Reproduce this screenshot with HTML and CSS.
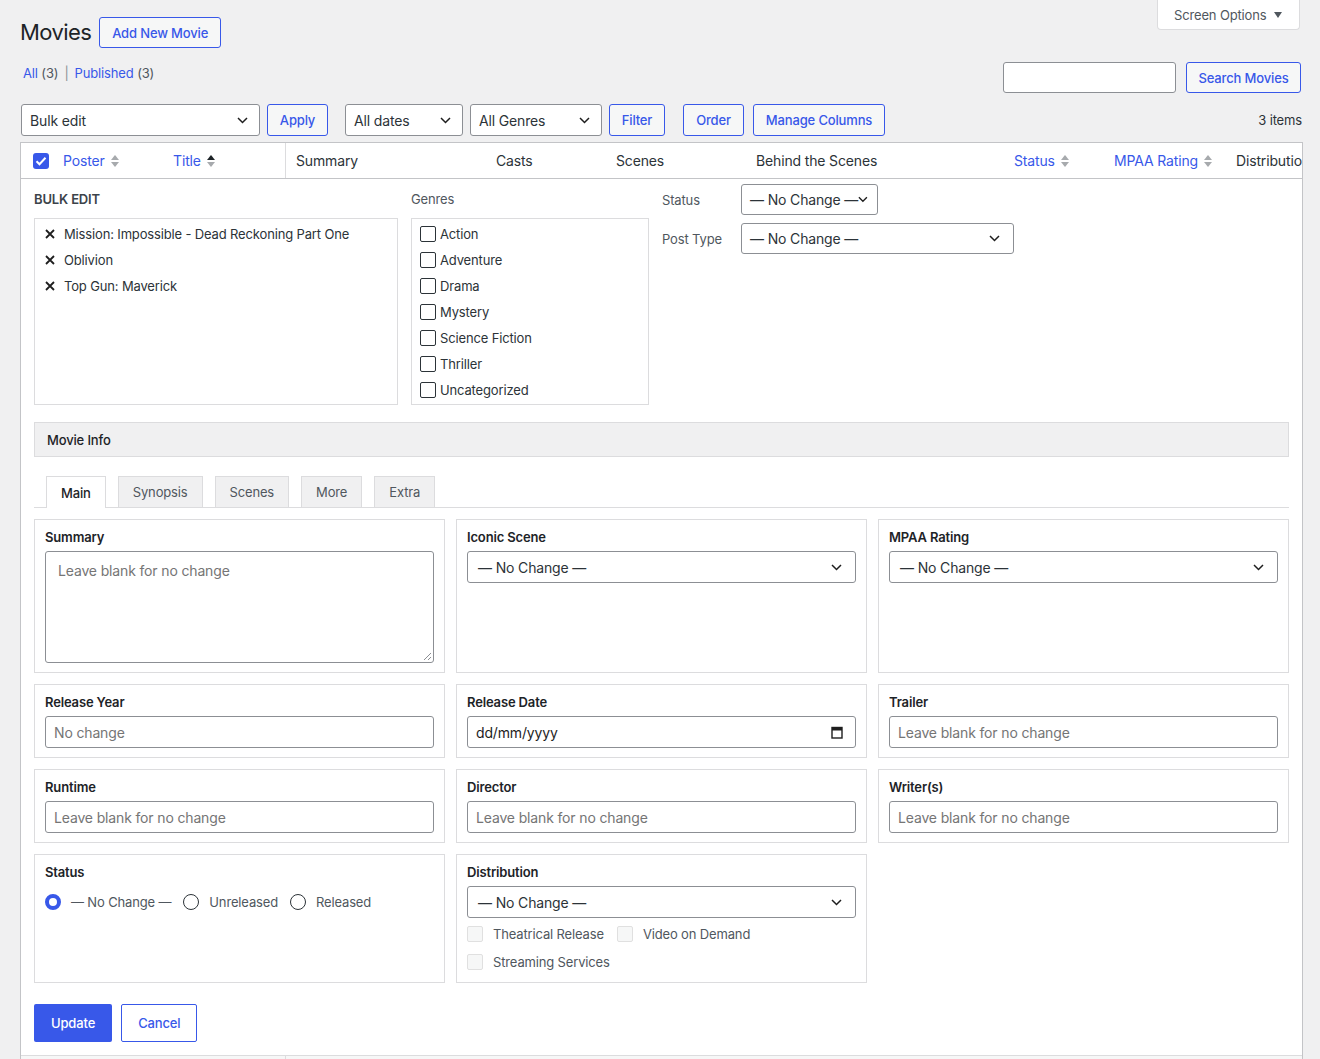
FILE: index.html
```html
<!DOCTYPE html>
<html lang="en">
<head>
	<meta charset="utf-8">
	<title>Movies</title>
	<link rel="stylesheet" href="styles.css">
</head>
<body>
<div class="wrap">
	<div class="top">
		<div class="title-line">
			<h1>Movies</h1>
			<a class="button" href="#">Add New Movie</a>
		</div>
		<div class="screen-options">Screen Options
			<svg width="8" height="6" viewBox="0 0 8 6"><path d="M0 0h8L4 6z" fill="#50575e"/></svg>
		</div>
	</div>

	<div class="subbar">
		<div class="subsubsub">
			<span><a href="#">All</a> <span class="count">(3)</span></span>
			<span class="sep">|</span>
			<span><a href="#">Published</a> <span class="count">(3)</span></span>
		</div>
		<div class="search">
			<div class="search-input"></div>
			<a class="button" href="#">Search Movies</a>
		</div>
	</div>

	<div class="tablenav">
		<div class="select w-bulk"><span>Bulk edit</span>
			<svg width="11" height="7" viewBox="0 0 11 7"><path d="M1 1l4.5 4.5L10 1" stroke="#1e1e1e" stroke-width="1.5" fill="none"/></svg>
		</div>
		<a class="button btn-apply" href="#">Apply</a>
		<div class="select w-dates"><span>All dates</span>
			<svg width="11" height="7" viewBox="0 0 11 7"><path d="M1 1l4.5 4.5L10 1" stroke="#1e1e1e" stroke-width="1.5" fill="none"/></svg>
		</div>
		<div class="select w-genres"><span>All Genres</span>
			<svg width="11" height="7" viewBox="0 0 11 7"><path d="M1 1l4.5 4.5L10 1" stroke="#1e1e1e" stroke-width="1.5" fill="none"/></svg>
		</div>
		<a class="button btn-filter" href="#">Filter</a>
		<a class="button btn-order" href="#">Order</a>
		<a class="button btn-columns" href="#">Manage Columns</a>
		<div class="items-count">3 items</div>
	</div>

	<div class="table">
		<div class="thead">
			<div class="th col-cb">
				<span class="cb-checked">
					<svg width="12" height="10" viewBox="0 0 12 10"><path d="M1.5 5.2l3 3L10.5 1.8" stroke="#fff" stroke-width="2" fill="none"/></svg>
				</span>
			</div>
			<div class="th col-poster"><a href="#">Poster</a>
				<svg width="8" height="14" viewBox="0 0 8 14"><path d="M0 6L4 1l4 5z" fill="#a7aaad"/><path d="M0 8h8l-4 5z" fill="#a7aaad"/></svg>
			</div>
			<div class="th col-title"><a href="#">Title</a>
				<svg width="8" height="14" viewBox="0 0 8 14"><path d="M0 6L4 1l4 5z" fill="#1d2327"/><path d="M0 8h8l-4 5z" fill="#a7aaad"/></svg>
			</div>
			<div class="th col-summary">Summary</div>
			<div class="th col-casts">Casts</div>
			<div class="th col-scenes">Scenes</div>
			<div class="th col-bts">Behind the Scenes</div>
			<div class="th col-status"><a href="#">Status</a>
				<svg width="8" height="14" viewBox="0 0 8 14"><path d="M0 6L4 1l4 5z" fill="#a7aaad"/><path d="M0 8h8l-4 5z" fill="#a7aaad"/></svg>
			</div>
			<div class="th col-mpaa"><a href="#">MPAA Rating</a>
				<svg width="8" height="14" viewBox="0 0 8 14"><path d="M0 6L4 1l4 5z" fill="#a7aaad"/><path d="M0 8h8l-4 5z" fill="#a7aaad"/></svg>
			</div>
			<div class="th col-dist">Distribution</div>
		</div>

		<div class="bulk">
			<div class="bulk-top">
				<div class="bulk-col">
					<div class="bulk-label bulk-title">Bulk Edit</div>
					<ul class="title-list">
						<li><svg width="10" height="10" viewBox="0 0 10 10"><path d="M1 1l8 8M9 1l-8 8" stroke="#1e1e1e" stroke-width="1.8"/></svg>Mission: Impossible - Dead Reckoning Part One</li>
						<li><svg width="10" height="10" viewBox="0 0 10 10"><path d="M1 1l8 8M9 1l-8 8" stroke="#1e1e1e" stroke-width="1.8"/></svg>Oblivion</li>
						<li><svg width="10" height="10" viewBox="0 0 10 10"><path d="M1 1l8 8M9 1l-8 8" stroke="#1e1e1e" stroke-width="1.8"/></svg>Top Gun: Maverick</li>
					</ul>
				</div>
				<div class="bulk-col">
					<div class="bulk-label">Genres</div>
					<ul class="genre-list">
						<li><span class="box"></span>Action</li>
						<li><span class="box"></span>Adventure</li>
						<li><span class="box"></span>Drama</li>
						<li><span class="box"></span>Mystery</li>
						<li><span class="box"></span>Science Fiction</li>
						<li><span class="box"></span>Thriller</li>
						<li><span class="box"></span>Uncategorized</li>
					</ul>
				</div>
				<div class="bulk-fields">
					<div class="field-row">
						<span class="lbl">Status</span>
						<div class="select s-status"><span>— No Change —</span>
							<svg width="11" height="7" viewBox="0 0 11 7"><path d="M1 1l4.5 4.5L10 1" stroke="#1e1e1e" stroke-width="1.5" fill="none"/></svg>
						</div>
					</div>
					<div class="field-row">
						<span class="lbl">Post Type</span>
						<div class="select s-post"><span>— No Change —</span>
							<svg width="11" height="7" viewBox="0 0 11 7"><path d="M1 1l4.5 4.5L10 1" stroke="#1e1e1e" stroke-width="1.5" fill="none"/></svg>
						</div>
					</div>
				</div>
			</div>

			<div class="section-bar">Movie Info</div>

			<div class="tabs">
				<div class="tab active">Main</div>
				<div class="tab">Synopsis</div>
				<div class="tab">Scenes</div>
				<div class="tab">More</div>
				<div class="tab">Extra</div>
			</div>

			<div class="fields">
				<div class="card">
					<div class="card-label">Summary</div>
					<div class="input textarea">Leave blank for no change
						<svg class="grip" width="8" height="8" viewBox="0 0 8 8"><path d="M8 1L1 8M8 5L5 8" stroke="#8c8f94" stroke-width="1"/></svg>
					</div>
				</div>
				<div class="card">
					<div class="card-label">Iconic Scene</div>
					<div class="select field-select"><span>— No Change —</span>
						<svg width="11" height="7" viewBox="0 0 11 7"><path d="M1 1l4.5 4.5L10 1" stroke="#1e1e1e" stroke-width="1.5" fill="none"/></svg>
					</div>
				</div>
				<div class="card">
					<div class="card-label">MPAA Rating</div>
					<div class="select field-select"><span>— No Change —</span>
						<svg width="11" height="7" viewBox="0 0 11 7"><path d="M1 1l4.5 4.5L10 1" stroke="#1e1e1e" stroke-width="1.5" fill="none"/></svg>
					</div>
				</div>

				<div class="card">
					<div class="card-label">Release Year</div>
					<div class="input">No change</div>
				</div>
				<div class="card">
					<div class="card-label">Release Date</div>
					<div class="input date"><span>dd/mm/yyyy</span>
						<svg width="12" height="13" viewBox="0 0 12 13"><rect x="1" y="1.5" width="10" height="10.5" fill="none" stroke="#1e1e1e" stroke-width="1.4"/><rect x="1" y="1.5" width="10" height="3" fill="#1e1e1e"/></svg>
					</div>
				</div>
				<div class="card">
					<div class="card-label">Trailer</div>
					<div class="input">Leave blank for no change</div>
				</div>

				<div class="card">
					<div class="card-label">Runtime</div>
					<div class="input">Leave blank for no change</div>
				</div>
				<div class="card">
					<div class="card-label">Director</div>
					<div class="input">Leave blank for no change</div>
				</div>
				<div class="card">
					<div class="card-label">Writer(s)</div>
					<div class="input">Leave blank for no change</div>
				</div>

				<div class="card">
					<div class="card-label">Status</div>
					<div class="radios">
						<span class="radio checked"></span><span class="radio-text">— No Change —</span>
						<span class="radio"></span><span class="radio-text">Unreleased</span>
						<span class="radio"></span><span class="radio-text">Released</span>
					</div>
				</div>
				<div class="card">
					<div class="card-label">Distribution</div>
					<div class="select field-select"><span>— No Change —</span>
						<svg width="11" height="7" viewBox="0 0 11 7"><path d="M1 1l4.5 4.5L10 1" stroke="#1e1e1e" stroke-width="1.5" fill="none"/></svg>
					</div>
					<div class="checks">
						<span class="check"><span class="box disabled"></span>Theatrical Release</span>
						<span class="check"><span class="box disabled"></span>Video on Demand</span>
						<span class="check"><span class="box disabled"></span>Streaming Services</span>
					</div>
				</div>
			</div>

			<div class="actions">
				<a class="btn-primary" href="#">Update</a>
				<a class="btn-cancel" href="#">Cancel</a>
			</div>
		</div>

		<div class="next-row">
			<div class="next-cell"></div>
		</div>
	</div>
</div>
</body>
</html>
```

FILE: styles.css
```css
html, body {
	margin: 0;
	padding: 0;
}

*, *:before, *:after {
	box-sizing: border-box;
}

body {
	background: #f0f0f1;
	color: #1d2327;
	font-family: Inter, "Noto Sans", sans-serif;
	font-size: 13px;
	letter-spacing: -0.15px;
}

a {
	color: #3858e9;
	text-decoration: none;
}

ul {
	list-style: none;
	margin: 0;
}

.wrap {
	padding: 0 17px 0 20px;
}

/* page header */

.top {
	display: flex;
	justify-content: space-between;
	align-items: flex-start;
}

.title-line {
	display: flex;
	align-items: center;
	gap: 8px;
	padding-top: 17px;
}

h1 {
	margin: 0;
	font-size: 22px;
	font-weight: 400;
	line-height: 31px;
	letter-spacing: -0.6px;
}

.button {
	display: inline-flex;
	align-items: center;
	justify-content: center;
	height: 31px;
	padding: 0 12px;
	border: 1px solid #3858e9;
	border-radius: 3px;
	background: #f6f7f7;
	color: #3858e9;
	font-size: 13px;
	font-weight: 500;
	white-space: nowrap;
}

.title-line .button {
	width: 122px;
}

.screen-options {
	display: flex;
	align-items: center;
	gap: 8px;
	width: 143px;
	height: 30px;
	padding: 0 16px;
	margin-right: 3px;
	background: #fff;
	border: 1px solid #dcdcde;
	border-top: none;
	border-radius: 0 0 4px 4px;
	color: #50575e;
}

.subbar {
	display: flex;
	justify-content: space-between;
	align-items: flex-start;
	margin-top: 14px;
}

.subsubsub {
	display: flex;
	gap: 6px;
	margin-top: 2px;
	padding-left: 3px;
	line-height: 18px;
}

.count {
	color: #50575e;
}

.sep {
	color: #8c8f94;
}

.search {
	display: flex;
	gap: 10px;
	margin-right: 2px;
}

.search-input {
	width: 173px;
	height: 31px;
	background: #fff;
	border: 1px solid #8c8f94;
	border-radius: 3px;
}

.search .button {
	width: 115px;
}

/* toolbar */

.tablenav {
	display: flex;
	align-items: center;
	height: 32px;
	margin-top: 11px;
}

.select {
	display: flex;
	align-items: center;
	justify-content: space-between;
	height: 32px;
	padding: 0 11px 0 8px;
	background: #fff;
	border: 1px solid #8c8f94;
	border-radius: 3px;
	color: #2c3338;
	font-size: 14px;
	white-space: nowrap;
}

.tablenav .button {
	height: 32px;
}

.w-bulk {
	width: 239px;
	margin-left: 1px;
}

.btn-apply {
	width: 61px;
	margin-left: 7px;
}

.w-dates {
	width: 118px;
	margin-left: 17px;
}

.w-genres {
	width: 132px;
	margin-left: 7px;
}

.btn-filter {
	width: 56px;
	margin-left: 7px;
}

.btn-order {
	width: 61px;
	margin-left: 18px;
}

.btn-columns {
	width: 132px;
	margin-left: 9px;
}

.items-count {
	margin-left: auto;
	margin-right: 1px;
	color: #2c3338;
}

/* table */

.table {
	margin-top: 6px;
	background: #fff;
	border: 1px solid #c3c4c7;
	overflow: hidden;
}

.thead {
	display: flex;
	height: 36px;
	border-bottom: 1px solid #c3c4c7;
}

.th {
	display: flex;
	align-items: center;
	gap: 6px;
	flex-shrink: 0;
	padding-left: 8px;
	color: #2c3338;
	font-size: 14px;
	white-space: nowrap;
}

.col-cb { width: 34px; padding-left: 12px; }
.col-poster { width: 110px; }
.col-title { width: 121px; border-right: 1px solid #dcdcde; }
.col-summary { width: 202px; padding-left: 10px; }
.col-casts { width: 120px; }
.col-scenes { width: 140px; }
.col-bts { width: 258px; }
.col-status { width: 100px; }
.col-mpaa { width: 122px; }

.cb-checked {
	display: flex;
	align-items: center;
	justify-content: center;
	width: 16px;
	height: 16px;
	border-radius: 3px;
	background: #3858e9;
}

/* bulk edit */

.bulk {
	padding: 0 13px 13px;
}

.bulk-top {
	display: flex;
	gap: 13px;
	padding-top: 5px;
}

.bulk-col {
	margin-top: 6px;
}

.bulk-label {
	margin-bottom: 10px;
	line-height: 18px;
	color: #50575e;
}

.bulk-title {
	color: #3c434a;
	font-weight: 600;
	text-transform: uppercase;
}

.title-list {
	width: 364px;
	height: 187px;
	padding: 6px 10px;
	border: 1px solid #dcdcde;
}

.title-list li {
	display: flex;
	align-items: center;
	gap: 9px;
	margin-bottom: 8px;
	line-height: 18px;
	color: #2c3338;
}

.genre-list {
	width: 238px;
	height: 187px;
	padding: 6px 8px;
	border: 1px solid #dcdcde;
}

.genre-list li {
	display: flex;
	align-items: center;
	gap: 4px;
	margin-bottom: 8px;
	line-height: 18px;
	color: #2c3338;
}

.box {
	display: inline-block;
	width: 16px;
	height: 16px;
	border: 1px solid #2c3338;
	border-radius: 2px;
	background: #fff;
}

.box.disabled {
	border-color: #e0e0e0;
	background: #f6f7f7;
}

.bulk-fields {
	display: flex;
	flex-direction: column;
	gap: 8px;
}

.field-row {
	display: flex;
	align-items: center;
}

.field-row .lbl {
	width: 79px;
	color: #50575e;
}

.s-status {
	width: 137px;
	height: 31px;
	padding-right: 9px;
}

.s-post {
	width: 273px;
	height: 31px;
	padding-right: 13px;
}

.section-bar {
	display: flex;
	align-items: center;
	height: 35px;
	margin-top: 17px;
	padding-left: 12px;
	background: #f0f0f1;
	border: 1px solid #dcdcde;
	color: #1d2327;
	font-weight: 500;
}

.tabs {
	display: flex;
	align-items: flex-end;
	gap: 12px;
	margin-top: 19px;
	padding-left: 12px;
	border-bottom: 1px solid #dcdcde;
}

.tab {
	display: flex;
	align-items: center;
	height: 31px;
	padding: 0 14px;
	background: #f0f0f1;
	border: 1px solid #dcdcde;
	border-bottom: none;
	color: #50575e;
}

.tab.active {
	height: 32px;
	margin-bottom: -1px;
	background: #fff;
	color: #1d2327;
	font-weight: 500;
}

/* field cards */

.fields {
	display: grid;
	grid-template-columns: repeat(3, 1fr);
	gap: 11px;
	margin-top: 11px;
}

.card {
	padding: 8px 10px 9px;
	border: 1px solid #dcdcde;
	background: #fff;
}

.card-label {
	margin-bottom: 5px;
	line-height: 18px;
	color: #1d2327;
	font-weight: 600;
}

.input {
	display: flex;
	align-items: center;
	height: 32px;
	padding: 0 8px;
	background: #fff;
	border: 1px solid #8c8f94;
	border-radius: 3px;
	color: #757575;
	font-size: 14px;
}

.textarea {
	position: relative;
	align-items: flex-start;
	height: 112px;
	padding: 10px 12px;
}

.grip {
	position: absolute;
	right: 2px;
	bottom: 2px;
}

.date {
	justify-content: space-between;
	padding-right: 12px;
	color: #1e1e1e;
}

.field-select {
	padding-left: 10px;
	padding-right: 13px;
}

.radios {
	display: flex;
	align-items: center;
	margin-top: 12px;
	color: #50575e;
}

.radio {
	width: 16px;
	height: 16px;
	border: 1px solid #2c3338;
	border-radius: 50%;
	background: #fff;
}

.radio.checked {
	border: 4.5px solid #3858e9;
}

.radio-text {
	margin: 0 12px 0 10px;
	line-height: 18px;
}

.checks {
	display: flex;
	flex-wrap: wrap;
	row-gap: 12px;
	margin-top: 8px;
	margin-bottom: 3px;
	color: #50575e;
}

.check {
	display: flex;
	align-items: center;
	gap: 10px;
	margin-right: 13px;
	line-height: 16px;
}

.actions {
	display: flex;
	gap: 9px;
	margin-top: 21px;
}

.btn-primary {
	display: flex;
	align-items: center;
	height: 38px;
	padding: 0 17px;
	background: #3858e9;
	border-radius: 2px;
	color: #fff;
	font-weight: 500;
}

.btn-cancel {
	display: flex;
	align-items: center;
	height: 38px;
	padding: 0 16px;
	background: #fff;
	border: 1px solid #3858e9;
	border-radius: 2px;
	color: #3858e9;
	font-weight: 500;
}

.next-row {
	display: flex;
	height: 40px;
	background: #f6f7f7;
	border-top: 1px solid #dcdcde;
}

.next-cell {
	width: 265px;
	border-right: 1px solid #dcdcde;
}
```
